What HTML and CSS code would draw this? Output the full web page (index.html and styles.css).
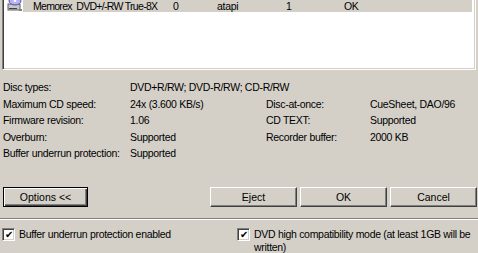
FILE: index.html
```html
<!DOCTYPE html>
<html lang="en">
<head>
  <meta charset="UTF-8" />
  <title>Recorder properties</title>
  <link rel="stylesheet" href="styles.css">
</head>
<body>
  <div class="list">
    <div class="row">
      <span class="drive-icon">
        <svg width="16" height="13" viewBox="0 0 16 13">
          <rect x="1" y="5" width="12" height="6" fill="#c8c8c8" stroke="#606060"/>
          <rect x="2" y="9" width="8" height="1" fill="#404040"/>
          <ellipse cx="8" cy="2" rx="6" ry="4" fill="#b8b0f0" stroke="#5050b0"/>
          <ellipse cx="8" cy="2" rx="1.5" ry="1" fill="#fff"/>
          <rect x="12" y="10" width="3" height="2" fill="#808080"/>
        </svg>
      </span>
      <div class="sel">
        <span class="c-name">Memorex&nbsp; DVD+/-RW True-8X</span>
        <span class="c-id">0</span>
        <span class="c-bus">atapi</span>
        <span class="c-lun">1</span>
        <span class="c-status">OK</span>
      </div>
    </div>
  </div>

  <div class="info">
    <span>Disc types:</span>
    <span class="wide">DVD+R/RW; DVD-R/RW; CD-R/RW</span>

    <span>Maximum CD speed:</span>
    <span>24x (3.600 KB/s)</span>
    <span>Disc-at-once:</span>
    <span>CueSheet, DAO/96</span>

    <span>Firmware revision:</span>
    <span>1.06</span>
    <span>CD TEXT:</span>
    <span>Supported</span>

    <span>Overburn:</span>
    <span>Supported</span>
    <span>Recorder buffer:</span>
    <span>2000 KB</span>

    <span>Buffer underrun protection:</span>
    <span>Supported</span>
  </div>

  <div class="buttons">
    <button class="btn default">Options &lt;&lt;</button>
    <div class="spacer"></div>
    <button class="btn">Eject</button>
    <button class="btn">OK</button>
    <button class="btn">Cancel</button>
  </div>

  <div class="sep"></div>

  <div class="checks">
    <label class="check">
      <span class="box">&#10004;</span>
      <span>Buffer underrun protection enabled</span>
    </label>
    <label class="check">
      <span class="box">&#10004;</span>
      <span class="long">DVD high compatibility mode (at least 1GB will be written)</span>
    </label>
  </div>
</body>
</html>
```

FILE: styles.css
```css
:root {
  --face: #d4d0c8;
  --shadow: #808080;
  --dark: #404040;
  --light: #fff;
}
* { box-sizing: border-box; margin: 0; padding: 0; }
body {
  width: 478px; height: 253px; overflow: hidden;
  background: var(--face); color: #000;
  font: 10.5px "Liberation Sans", Arial, sans-serif;
  letter-spacing: -0.3px;
}

/* list box, scrolled so only the last row shows */
.list {
  margin: 0 2px;
  height: 70px;
  background: #fff;
  border: 1px solid;
  border-top: none;
  border-color: var(--shadow) var(--light) var(--light) var(--shadow);
  box-shadow: inset 1px 0 var(--dark), inset -1px -1px var(--face);
  padding-left: 2px;
}
.row { display: flex; height: 12px; }
.drive-icon { width: 18px; display: flex; align-items: flex-end; padding-left: 2px; overflow: hidden; }
.sel {
  display: flex; align-items: center;
  width: 449px; background: var(--face);
  padding-left: 10px; line-height: 12px;
  white-space: nowrap;
}
.c-name { width: 140px; letter-spacing: -0.7px; }
.c-id { width: 44px; }
.c-bus { width: 69px; }
.c-lun { width: 58px; }

/* device details */
.info {
  display: grid;
  grid-template-columns: 127px 136px 104px 1fr;
  grid-auto-rows: 16.5px;
  align-items: center;
  padding: 9px 0 0 3px;
  white-space: nowrap;
}
.info .wide { grid-column: span 3; }

/* buttons */
.buttons { display: flex; gap: 3px; padding: 25px 1px 0 3px; }
.spacer { flex: 1; }
.btn {
  width: 87px; height: 20px;
  font: inherit; color: #000;
  background: var(--face);
  border: 1px solid;
  border-color: var(--light) var(--dark) var(--dark) var(--light);
  box-shadow: inset -1px -1px var(--shadow);
}
.btn.default {
  width: 85px;
  border: 1px solid #000;
  box-shadow: inset 1px 1px var(--light), inset -1px -1px var(--dark), inset -2px -2px var(--shadow);
}

.sep {
  margin-top: 11px;
  border-top: 1px solid var(--shadow);
  border-bottom: 1px solid var(--light);
}

/* check boxes */
.checks {
  display: grid;
  grid-template-columns: 235px 241px;
  padding: 8px 0 0 2px;
}
.check { display: flex; align-items: flex-start; gap: 4px; line-height: 13px; }
.long { width: 218px; }
.box {
  flex: none;
  width: 13px; height: 13px;
  background: #fff;
  border: 1px solid;
  border-color: var(--shadow) var(--light) var(--light) var(--shadow);
  box-shadow: inset 1px 1px var(--dark), inset -1px -1px var(--face);
  font-size: 10px; line-height: 11px; text-align: center;
}
```
